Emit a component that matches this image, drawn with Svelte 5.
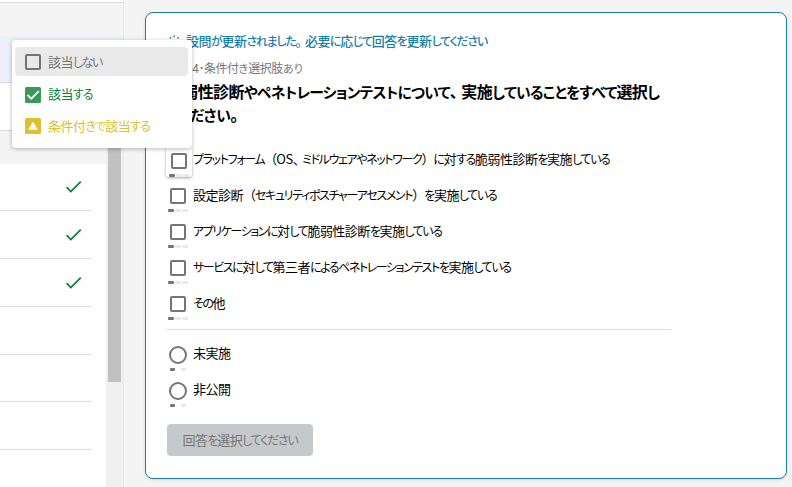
<script>
  const rows = [true, true, true, false, false, false];

  const choices = [
    { label: 'プラットフォーム（OS、ミドルウェアやネットワーク）に対する脆弱性診断を実施している', width: 416.5, active: true },
    { label: '設定診断（セキュリティポスチャーアセスメント）を実施している', width: 303.5 },
    { label: 'アプリケーションに対して脆弱性診断を実施している', width: 248.5 },
    { label: 'サービスに対して第三者によるペネトレーションテストを実施している', width: 317.5 },
    { label: 'その他', width: 32 },
  ];

  const exclusive = ['未実施', '非公開'];

  // split a label into kana, brackets, stops and everything else
  function runs(text) {
    return text.match(/[ぁ-ゖァ-ヺー]+|[（）]|[、。]|[^ぁ-ゖァ-ヺー（）、。]+/g).map((part) => {
      let kind = 'base';
      if (/^[ぁ-ゖァ-ヺー]/.test(part)) kind = 'kana';
      if (/^[（）]/.test(part)) kind = 'bracket';
      if (/^[、。]/.test(part)) kind = 'stop';
      return { part, kind };
    });
  }

  function fit(node, width) {
    const count = [...node.querySelectorAll('.kana')].reduce((sum, el) => sum + el.textContent.length, 0);
    if (!count) return;
    const spare = width - node.getBoundingClientRect().width;
    node.style.setProperty('--kana', `${spare / count}px`);
  }
</script>

{#snippet tight(text, width)}
  <span class="tight" use:fit={width}>{#each runs(text) as run}<span class={run.kind}>{run.part}</span>{/each}</span>
{/snippet}

<div class="page">
  <aside>
    <div class="strip top"></div>
    <div class="strip band"></div>
    <div class="strip selected"></div>
    <div class="strip blank"></div>
    <div class="list">
      <div class="items">
        <div class="group"></div>
        {#each rows as done}
          <div class="item">
            {#if done}
              <svg width="21" height="21" viewBox="0 0 24 24">
                <path d="M9 16.17 4.83 12l-1.42 1.41L9 19 21 7l-1.41-1.41z" fill="#0b8235" />
              </svg>
            {/if}
          </div>
        {/each}
      </div>
      <div class="scrollbar"><div class="thumb"></div></div>
    </div>
  </aside>

  <main>
    <section class="card">
      <div class="notice">
        <svg width="16" height="16" viewBox="0 0 16 16" fill="#1a7fa8">
          <circle cx="7.2" cy="4.4" r="0.9" />
          <circle cx="3.4" cy="5.8" r="0.9" />
          <circle cx="11" cy="5.8" r="0.9" />
          <circle cx="7.2" cy="11" r="2.6" />
        </svg>
        {@render tight('設問が更新されました。必要に応じて回答を更新してください', 301)}
      </div>
      <div class="meta">{@render tight('設問 4･条件付き選択肢あり', 136)}</div>
      <h1>
        <div>{@render tight('脆弱性診断やペネトレーションテストについて、実施していることをすべて選択し', 492.5)}</div>
        <div>{@render tight('てください。', 75)}</div>
      </h1>

      <div class="choices">
        {#each choices as choice}
          <div class="choice">
            <div class="control" class:active={choice.active}>
              <div class="box"></div>
              <div class="pips"><i class="on"></i><i></i><i></i></div>
            </div>
            <div class="label">{@render tight(choice.label, choice.width)}</div>
          </div>
        {/each}
      </div>

      <hr />

      <div class="choices">
        {#each exclusive as label}
          <div class="choice">
            <div class="control">
              <div class="box round"></div>
              <div class="pips two"><i class="on"></i><i></i></div>
            </div>
            <div class="label">{@render tight(label, 38)}</div>
          </div>
        {/each}
      </div>

      <button disabled>{@render tight('回答を選択してください', 115)}</button>
    </section>
  </main>

  <div class="menu">
    <div class="option none">
      <svg width="16" height="16" viewBox="0 0 16 16">
        <rect x="1" y="1" width="14" height="14" rx="1" fill="none" stroke="#757575" stroke-width="2" />
      </svg>
      {@render tight('該当しない', 54)}
    </div>
    <div class="option yes">
      <svg width="16" height="16" viewBox="0 0 16 16">
        <rect width="16" height="16" rx="1.5" fill="#359b57" />
        <path d="M2.5 8 6.3 11.7 13.8 4.2" fill="none" stroke="#fff" stroke-width="1.8" />
      </svg>
      {@render tight('該当する', 44.5)}
    </div>
    <div class="option partial">
      <svg width="16" height="16" viewBox="0 0 16 16">
        <rect width="16" height="16" rx="1.5" fill="#dcc02d" />
        <path d="M8 3.7 12.8 11.8H3.2z" fill="#fff" />
      </svg>
      {@render tight('条件付きで該当する', 102)}
    </div>
  </div>
</div>

<style>
  :global(body) {
    margin: 0;
    overflow: hidden;
  }

  .page {
    position: relative;
    display: flex;
    width: 792px;
    height: 487px;
    overflow: hidden;
    background: #f4f4f4;
    color: #000;
    font-family: "Noto Sans CJK JP", sans-serif;
    font-size: 13px;
    white-space: nowrap;
  }

  .tight {
    display: inline-block;
    flex: none;
  }

  .base {
    letter-spacing: -0.04em;
  }

  .kana {
    font-size: 0.92em;
    font-feature-settings: "palt";
    letter-spacing: var(--kana, 0);
  }

  .bracket {
    letter-spacing: -0.08em;
  }

  .stop {
    letter-spacing: -0.28em;
  }

  aside {
    box-sizing: border-box;
    display: flex;
    flex-direction: column;
    flex: none;
    width: 124px;
    border-right: 1px solid #e8e8e8;
  }

  .strip {
    box-sizing: border-box;
    flex: none;
    border-bottom: 1px solid #dcdcdc;
  }

  .top {
    height: 3px;
    background: #fff;
  }

  .band {
    height: 33px;
    border: none;
  }

  .selected {
    height: 47px;
    background: #ebf0fa;
  }

  .blank {
    height: 48px;
    background: #fff;
  }

  .list {
    display: flex;
    flex: 1;
    min-height: 0;
  }

  .items {
    width: 106px;
    background: #fff;
    overflow: hidden;
  }

  .group {
    height: 32.6px;
    background: #f4f4f4;
  }

  .item {
    box-sizing: border-box;
    display: flex;
    align-items: center;
    justify-content: flex-end;
    width: 92px;
    height: 47.75px;
    padding-right: 8px;
    border-bottom: 1px solid #dcdcdc;
  }

  .scrollbar {
    flex: 1;
    background: #f0f0f0;
  }

  .thumb {
    width: 13px;
    height: 251px;
    margin-left: 2px;
    background: #c1c1c1;
  }

  main {
    padding: 12px 0 0 21px;
  }

  .card {
    box-sizing: border-box;
    width: 642px;
    height: 467px;
    padding: 17px 21px 0;
    border: 1px solid #1a7fa8;
    border-radius: 8px;
    background: #fff;
    box-shadow: 0 1px 3px rgba(0, 0, 0, 0.12);
  }

  .notice {
    display: flex;
    align-items: center;
    gap: 3px;
    height: 20px;
    color: #1a7fa8;
    font-weight: 500;
  }

  .meta {
    height: 20px;
    margin-top: 8px;
    line-height: 20px;
    color: #777;
    font-size: 12px;
  }

  h1 {
    height: 47px;
    margin: 2px 0 0;
    font-size: 16px;
    line-height: 23px;
    font-weight: 700;
  }

  h1 div {
    height: 23px;
  }

  .choices {
    display: flex;
    flex-direction: column;
  }

  h1 + .choices {
    margin-top: 14px;
  }

  .choice {
    display: flex;
    height: 36px;
  }

  .control {
    box-sizing: border-box;
    display: flex;
    flex-direction: column;
    align-items: center;
    flex: none;
    width: 22px;
    height: 31px;
    margin-top: 8px;
    padding-top: 3px;
  }

  .active {
    width: 26px;
    margin: 5px -3px 0 -1px;
    padding-top: 7px;
    border-radius: 3px;
    background: #fff;
    box-shadow: 0 1px 3px rgba(0, 0, 0, 0.35);
  }

  .box {
    box-sizing: border-box;
    width: 16px;
    height: 16px;
    border: 2px solid #757575;
    border-radius: 2px;
  }

  .round {
    width: 18px;
    height: 18px;
    border-radius: 50%;
  }

  .pips {
    display: flex;
    gap: 1.5px;
    margin-top: 5px;
  }

  .pips i {
    width: 5.5px;
    height: 2.5px;
    border-radius: 1px;
    background: #e8e8e8;
  }

  .pips .on {
    background: #757575;
  }

  .pips.two {
    gap: 6px;
    margin-top: 4px;
  }

  .two i {
    width: 5px;
  }

  .label {
    margin-left: 4px;
    line-height: 36px;
  }

  hr {
    width: 504px;
    height: 1px;
    margin: 8px 0 5px;
    border: none;
    background: #dcdcdc;
  }

  button {
    width: 146px;
    height: 32px;
    margin-top: 17px;
    padding: 0 0 2px;
    border: none;
    border-radius: 4px;
    background: #c5c9cc;
    color: #757575;
    font: inherit;
  }

  .menu {
    position: absolute;
    left: 12px;
    top: 40px;
    box-sizing: border-box;
    width: 180px;
    height: 108px;
    padding: 7px 4px 0 3px;
    border-radius: 4px;
    background: #fff;
    box-shadow: 0 1px 4px rgba(0, 0, 0, 0.28);
  }

  .option {
    display: flex;
    align-items: center;
    gap: 7px;
    height: 29px;
    margin-bottom: 3px;
    padding-left: 10px;
    border-radius: 4px;
  }

  .option svg {
    margin-top: 1px;
  }

  .yes svg {
    margin-top: 3px;
  }

  .none {
    background: #e9e9e9;
    color: #757575;
  }

  .yes {
    color: #0b8235;
  }

  .partial {
    color: #dcc02d;
  }
</style>
